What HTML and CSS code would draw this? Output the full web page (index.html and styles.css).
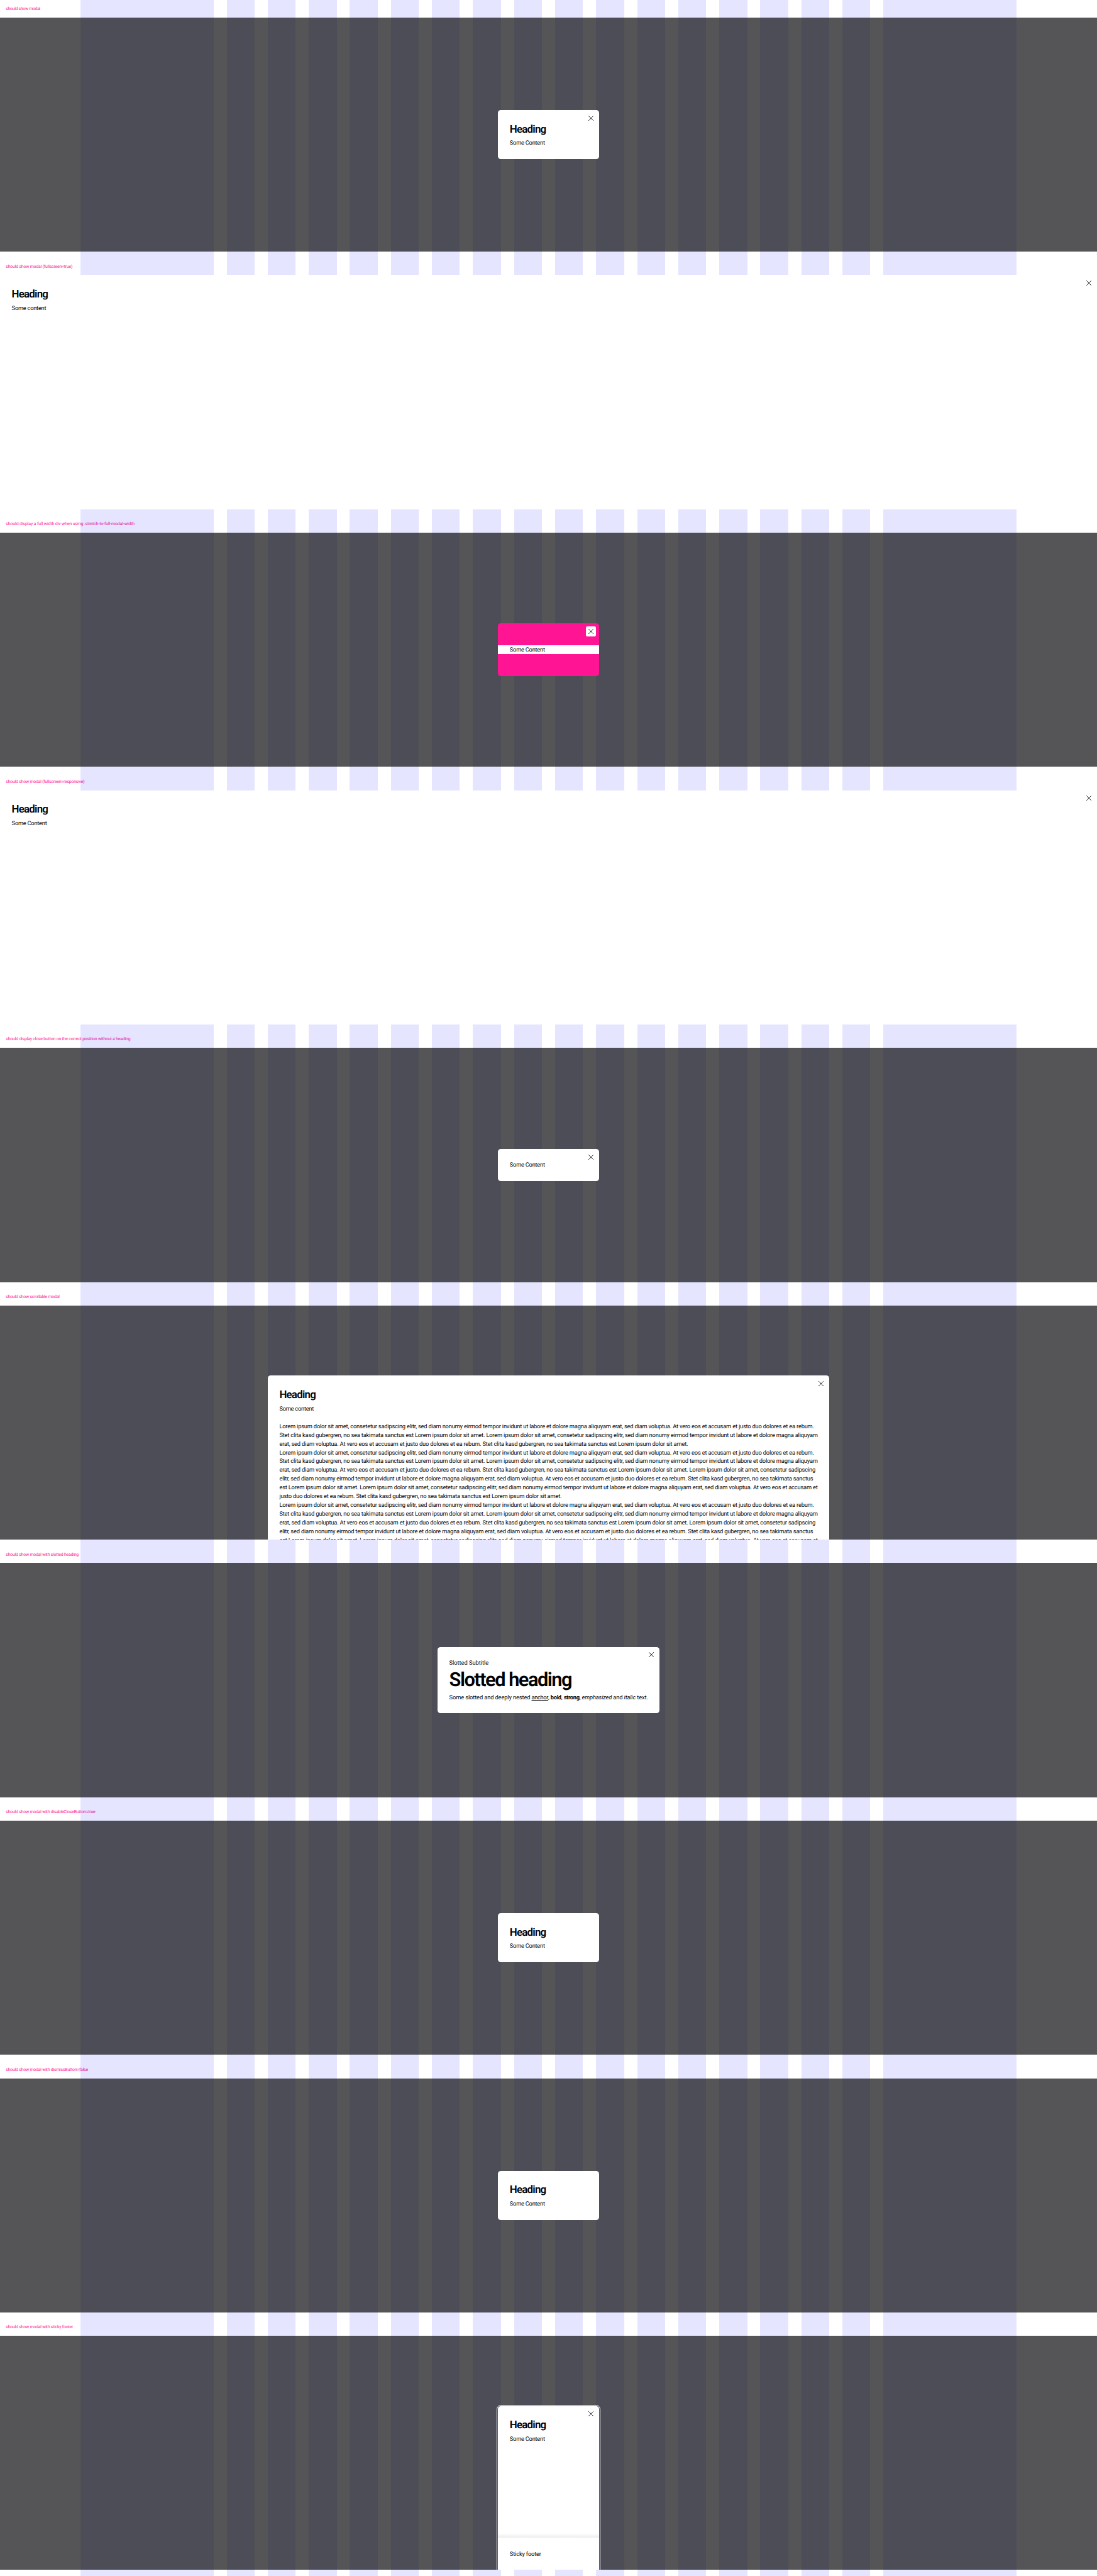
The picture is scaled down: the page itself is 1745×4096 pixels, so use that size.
FILE: index.html
```html
<!DOCTYPE html>
<html lang="en">
<head>
<meta charset="utf-8">
<title>Modal</title>
<link rel="stylesheet" href="styles.css">
</head>
<body>
<svg class="defs" aria-hidden="true"><symbol id="close" viewBox="0 0 14 14"><path d="M.2.2l13.6 13.6M13.8.2L.2 13.8" fill="none" stroke="#010205" stroke-width="1.5"/></symbol></svg>

<div class="page">
  <div class="grid">
    <i></i><i></i><i></i><i></i><i></i><i></i><i></i><i></i><i></i>
    <i></i><i></i><i></i><i></i><i></i><i></i><i></i><i></i><i></i>
  </div>

  <p class="label label-first tight">should show modal</p>
  <section class="frame">
    <div class="modal">
      <button class="close"><svg><use href="#close"/></svg></button>
      <h2>Heading</h2>
      <p class="some">Some Content</p>
    </div>
  </section>

  <p class="label semi">should show modal (fullscreen=true)</p>
  <section class="frame">
    <div class="modal fullscreen">
      <button class="close"><svg><use href="#close"/></svg></button>
      <h2>Heading</h2>
      <p class="some">Some content</p>
    </div>
  </section>

  <p class="label loose">should display a full width div when using .stretch-to-full-modal-width</p>
  <section class="frame">
    <div class="modal pink">
      <button class="close"><svg><use href="#close"/></svg></button>
      <p class="stretch some">Some Content</p>
    </div>
  </section>

  <p class="label">should show modal (fullscreen=responsive)</p>
  <section class="frame">
    <div class="modal fullscreen">
      <button class="close"><svg><use href="#close"/></svg></button>
      <h2>Heading</h2>
      <p class="some">Some Content</p>
    </div>
  </section>

  <p class="label semi">should display close button on the correct position without a heading</p>
  <section class="frame">
    <div class="modal">
      <button class="close"><svg><use href="#close"/></svg></button>
      <p class="some">Some Content</p>
    </div>
  </section>

  <p class="label">should show scrollable modal</p>
  <section class="frame top">
    <div class="modal scrollable">
      <button class="close"><svg><use href="#close"/></svg></button>
      <h2>Heading</h2>
      <p class="some">Some content</p>
      <p class="lorem">
        Lorem ipsum dolor sit amet, consetetur sadipscing elitr, sed diam nonumy eirmod tempor invidunt ut labore et dolore magna aliquyam erat, sed diam voluptua. At vero eos et accusam et justo duo dolores et ea rebum.<br>
        Stet clita kasd gubergren, no sea takimata sanctus est Lorem ipsum dolor sit amet. Lorem ipsum dolor sit amet, consetetur sadipscing elitr, sed diam nonumy eirmod tempor invidunt ut labore et dolore magna aliquyam<br>
        erat, sed diam voluptua. At vero eos et accusam et justo duo dolores et ea rebum. Stet clita kasd gubergren, no sea takimata sanctus est Lorem ipsum dolor sit amet.<br>
        Lorem ipsum dolor sit amet, consetetur sadipscing elitr, sed diam nonumy eirmod tempor invidunt ut labore et dolore magna aliquyam erat, sed diam voluptua. At vero eos et accusam et justo duo dolores et ea rebum.<br>
        Stet clita kasd gubergren, no sea takimata sanctus est Lorem ipsum dolor sit amet. Lorem ipsum dolor sit amet, consetetur sadipscing elitr, sed diam nonumy eirmod tempor invidunt ut labore et dolore magna aliquyam<br>
        erat, sed diam voluptua. At vero eos et accusam et justo duo dolores et ea rebum. Stet clita kasd gubergren, no sea takimata sanctus est Lorem ipsum dolor sit amet. Lorem ipsum dolor sit amet, consetetur sadipscing<br>
        elitr, sed diam nonumy eirmod tempor invidunt ut labore et dolore magna aliquyam erat, sed diam voluptua. At vero eos et accusam et justo duo dolores et ea rebum. Stet clita kasd gubergren, no sea takimata sanctus<br>
        est Lorem ipsum dolor sit amet. Lorem ipsum dolor sit amet, consetetur sadipscing elitr, sed diam nonumy eirmod tempor invidunt ut labore et dolore magna aliquyam erat, sed diam voluptua. At vero eos et accusam et<br>
        justo duo dolores et ea rebum. Stet clita kasd gubergren, no sea takimata sanctus est Lorem ipsum dolor sit amet.<br>
        Lorem ipsum dolor sit amet, consetetur sadipscing elitr, sed diam nonumy eirmod tempor invidunt ut labore et dolore magna aliquyam erat, sed diam voluptua. At vero eos et accusam et justo duo dolores et ea rebum.<br>
        Stet clita kasd gubergren, no sea takimata sanctus est Lorem ipsum dolor sit amet. Lorem ipsum dolor sit amet, consetetur sadipscing elitr, sed diam nonumy eirmod tempor invidunt ut labore et dolore magna aliquyam<br>
        erat, sed diam voluptua. At vero eos et accusam et justo duo dolores et ea rebum. Stet clita kasd gubergren, no sea takimata sanctus est Lorem ipsum dolor sit amet. Lorem ipsum dolor sit amet, consetetur sadipscing<br>
        elitr, sed diam nonumy eirmod tempor invidunt ut labore et dolore magna aliquyam erat, sed diam voluptua. At vero eos et accusam et justo duo dolores et ea rebum. Stet clita kasd gubergren, no sea takimata sanctus<br>
        est Lorem ipsum dolor sit amet. Lorem ipsum dolor sit amet, consetetur sadipscing elitr, sed diam nonumy eirmod tempor invidunt ut labore et dolore magna aliquyam erat, sed diam voluptua. At vero eos et accusam et
      </p>
    </div>
  </section>

  <p class="label">should show modal with slotted heading</p>
  <section class="frame">
    <div class="modal slotted">
      <button class="close"><svg><use href="#close"/></svg></button>
      <p class="subtitle">Slotted Subtitle</p>
      <h1>Slotted heading</h1>
      <p class="rich">Some slotted and deeply nested <a>anchor</a>, <b>bold</b>, <b>strong</b>, <em>emphasized</em> and <em>italic</em> text.</p>
    </div>
  </section>

  <p class="label">should show modal with disableCloseButton=true</p>
  <section class="frame">
    <div class="modal">
      <h2>Heading</h2>
      <p class="some">Some Content</p>
    </div>
  </section>

  <p class="label">should show modal with dismissButton=false</p>
  <section class="frame">
    <div class="modal">
      <h2>Heading</h2>
      <p class="some">Some Content</p>
    </div>
  </section>

  <p class="label">should show modal with sticky footer</p>
  <section class="frame top">
    <div class="modal sticky">
      <button class="close"><svg><use href="#close"/></svg></button>
      <div class="body">
        <h2>Heading</h2>
        <p class="some">Some Content</p>
      </div>
      <footer>Sticky footer</footer>
    </div>
  </section>
</div>
</body>
</html>
```
FILE: styles.css
```css
/* 1rem = 10 design units */
html { font-size: 5.816667px; }
* { box-sizing: border-box; }
body {
  margin: 0;
  background: #fff;
  color: #010205;
  font: 1.6rem/2.4rem Roboto, "Liberation Sans", sans-serif;
  letter-spacing: -.0195em;
  white-space: nowrap;
  text-rendering: geometricPrecision;
}
h1, h2, p { margin: 0; }
.defs { position: absolute; width: 0; height: 0; }

.page { position: relative; height: 4096px; overflow: hidden; }

/* column guides, tinting the labels but covered by the frames */
.grid {
  position: absolute;
  inset: 0;
  z-index: 1;
  display: grid;
  grid-template-columns: 36.4rem repeat(16, 1fr) 36.4rem;
  gap: 3.6rem;
  padding: 0 22rem;
}
.grid i { background: rgba(0, 0, 255, .1); }

.label {
  height: 6.4rem;
  padding: 1.8rem 1.6rem 0;
  color: #ff1493;
  font-size: 1.2rem;
  line-height: 4.8rem;
  letter-spacing: -.0345em;
}
.label-first { height: 4.8rem; padding-top: .1rem; }
.tight { letter-spacing: -.0489em; }
.semi { letter-spacing: -.0306em; }
.loose { letter-spacing: -.0167em; }

.frame {
  position: relative;
  z-index: 2;
  display: flex;
  align-items: center;
  justify-content: center;
  height: 64.017rem;
  overflow: hidden;
  background: rgba(1, 2, 5, .67);
}
.frame.top { align-items: flex-start; }

.modal {
  position: relative;
  width: 27.6rem;
  padding: 3.36rem 3.2rem 3.04rem;
  border-radius: .8rem;
  background: #fff;
}
.modal h2 {
  margin-bottom: .6rem;
  font-size: 2.9rem;
  font-weight: 600;
  line-height: 4rem;
  letter-spacing: -.0455em;
}
.some { letter-spacing: -.027em; }

.close {
  position: absolute;
  top: .8rem;
  right: .8rem;
  display: flex;
  align-items: center;
  justify-content: center;
  width: 2.8rem;
  height: 2.8rem;
  padding: 0;
  border: 0;
  border-radius: .4rem;
  background: #fff;
}
.close svg { width: 1.4rem; height: 1.4rem; }

.fullscreen { width: 100%; height: 100%; border-radius: 0; }

.pink { padding: 6rem 0; background: #ff1493; }
.stretch { height: 2.4rem; padding: .13rem 3.2rem 0; background: #fff; }

.scrollable { width: 153.6rem; margin-top: 19.2rem; }
.lorem { margin-top: 2.4rem; }

.slotted { width: 60.7rem; }
.subtitle { letter-spacing: -.0035em; }
.modal h1 {
  margin: .3rem 0 .7rem;
  font-size: 5.3rem;
  font-weight: 600;
  line-height: 6rem;
  letter-spacing: -.0485em;
}
.rich { letter-spacing: -.0125em; }
.rich a { text-decoration: underline; letter-spacing: -.04em; }
.rich b { letter-spacing: -.035em; }

.sticky {
  height: 46rem;
  margin-top: 19.2rem;
  padding: 0;
  outline: .2rem solid #fff;
  outline-offset: .2rem;
}
.sticky .body { height: 36rem; padding: 3.36rem 3.2rem 0; overflow: hidden; }
.sticky footer {
  position: relative;
  height: 10rem;
  padding: 3.36rem 3.2rem 0;
  letter-spacing: -.017em;
}
.sticky footer::before {
  content: "";
  position: absolute;
  left: 0;
  right: 0;
  bottom: 100%;
  height: 1.2rem;
  background: linear-gradient(to top, rgba(0, 0, 0, .07), transparent);
}
```
